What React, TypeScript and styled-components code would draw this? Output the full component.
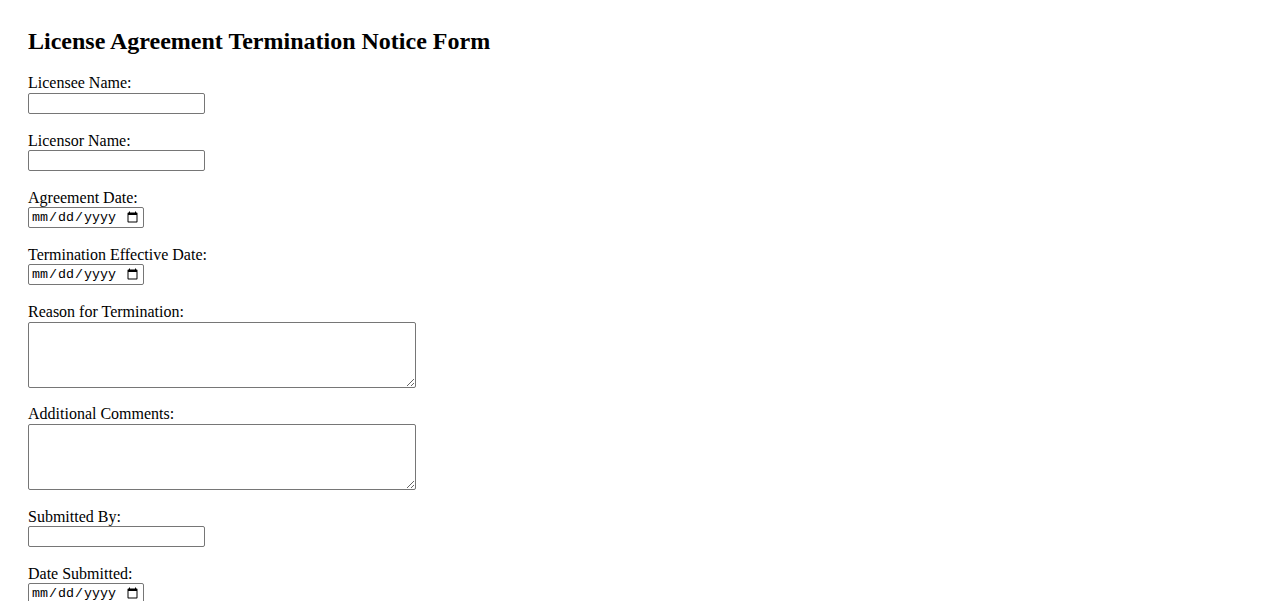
import React from "react";
import styled, { createGlobalStyle } from "styled-components";

const GlobalStyle = createGlobalStyle`
  body {
    margin: 8px;
    background: #ffffff;
    color: #000000;
    font-family: "Liberation Serif", "Times New Roman", serif;
  }
`;

const fields = [
  { id: "licensee", label: "Licensee Name:", kind: "text" },
  { id: "licensor", label: "Licensor Name:", kind: "text" },
  { id: "agreementDate", label: "Agreement Date:", kind: "date" },
  { id: "terminationDate", label: "Termination Effective Date:", kind: "date" },
  { id: "reason", label: "Reason for Termination:", kind: "area" },
  { id: "comments", label: "Additional Comments:", kind: "area" },
  { id: "submittedBy", label: "Submitted By:", kind: "text" },
  { id: "dateSubmitted", label: "Date Submitted:", kind: "date" },
];

export default function App() {
  return (
    <>
      <GlobalStyle />
      <FormPage>
        <Heading>License Agreement Termination Notice Form</Heading>
        <Form onSubmit={(e) => e.preventDefault()}>
          {fields.map((field) => (
            <Field key={field.id}>
              <Label htmlFor={field.id}>{field.label}</Label>
              {field.kind === "area" ? (
                <TextArea id={field.id} name={field.id} />
              ) : field.kind === "date" ? (
                <DateInput id={field.id} name={field.id} type="date" />
              ) : (
                <TextInput id={field.id} name={field.id} type="text" />
              )}
            </Field>
          ))}
        </Form>
      </FormPage>
    </>
  );
}

const FormPage = styled.div`
  padding: 19px 20px 0 20px;
`;

const Heading = styled.h2`
  margin: 0 0 19.4px 0;
  font-size: 24px;
  line-height: 28px;
  font-weight: bold;
`;

const Form = styled.form`
  display: flex;
  flex-direction: column;
  align-items: flex-start;
  gap: 17.8px;
`;

const Field = styled.div`
  display: flex;
  flex-direction: column;
  align-items: flex-start;
`;

const Label = styled.label`
  font-size: 16px;
  line-height: 18.4px;
`;

const controlBase = `
  box-sizing: border-box;
  margin: 0;
  border: 1px solid #767676;
  border-radius: 2px;
  background: #ffffff;
  padding: 1px 2px;
`;

const TextInput = styled.input`
  ${controlBase}
  width: 177px;
  height: 21px;
  font-family: "Liberation Sans", Arial, sans-serif;
  font-size: 13.33px;
`;

const DateInput = styled.input`
  ${controlBase}
  width: 116px;
  height: 21px;
  font-family: "Liberation Mono", "Courier New", monospace;
  font-size: 13.33px;
  color: #000000;
`;

const TextArea = styled.textarea`
  ${controlBase}
  width: 388px;
  height: 66px;
  font-family: "Liberation Mono", "Courier New", monospace;
  font-size: 13.33px;
  resize: both;
`;
